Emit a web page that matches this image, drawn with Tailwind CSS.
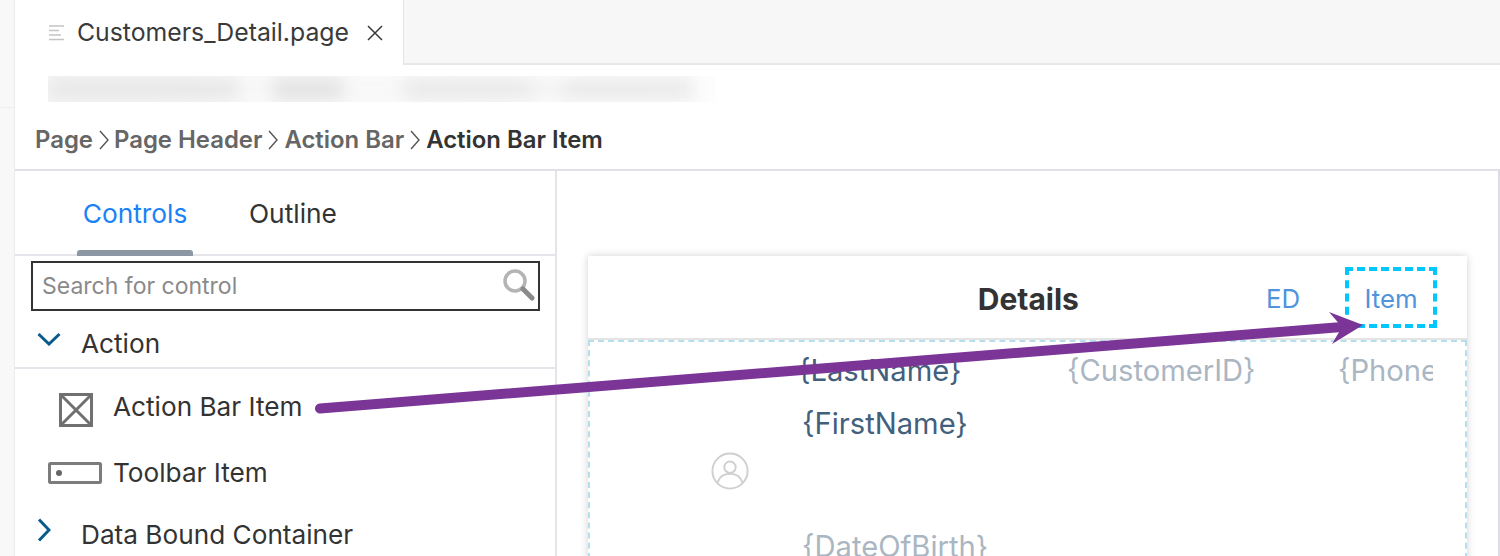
<!DOCTYPE html>
<html lang="en">
<head>
    <meta charset="UTF-8">
    <title>Customers_Detail.page</title>
    <script src="https://cdn.jsdelivr.net/npm/@tailwindcss/browser@4"></script>
</head>
<body class="bg-white font-['Inter',sans-serif] text-[#333] overflow-hidden">
<div class="relative flex w-[1500px] h-[556px] overflow-hidden">
    <!-- left gutter -->
    <div class="w-[15px] shrink-0 border-r border-[#ececec] bg-[#f8f8f8]">
        <div class="h-[108px] border-b border-[#eeeeee]"></div>
    </div>

    <div class="flex-1 flex flex-col min-w-0">
        <!-- tab strip -->
        <div class="flex h-[65px] bg-[#f7f7f7] shrink-0">
            <div class="flex items-center w-[389px] h-[65px] bg-white border-r border-[#e4e4e4] pl-[33px]">
                <svg class="w-[18px] h-[18px] mr-[11px] text-[#c4c4c4]" viewBox="0 0 18 18" fill="none" stroke="currentColor" stroke-width="1.6">
                    <path d="M1 2h15M1 6.500h10M1 11h12M1 15.500h15"/>
                </svg>
                <span class="text-[24.800px] leading-none text-[#3a3a3a]">Customers_Detail.page</span>
                <svg class="w-[18px] h-[18px] ml-[17px] text-[#3a3a3a]" viewBox="0 0 18 18" fill="none" stroke="currentColor" stroke-width="1.5">
                    <path d="M2 2l14 14M16 2L2 16"/>
                </svg>
            </div>
            <div class="flex-1 border-b-2 border-[#e8e8e8]"></div>
        </div>

        <!-- blurred path + breadcrumb -->
        <div class="h-[106px] shrink-0 border-b-2 border-[#e0e0e6] flex flex-col">
            <div class="ml-[33px] mt-[11px] w-[667px] h-[26px] overflow-hidden bg-linear-to-r from-[#f6f6f6] to-[#fdfdfd] flex items-center">
                <div class="flex w-full h-[20px] blur-[9px]">
                    <div class="w-[190px] bg-[#e6e6e6]"></div>
                    <div class="w-[35px] bg-[#f8f8f8]"></div>
                    <div class="w-[70px] bg-[#e0e0e0]"></div>
                    <div class="w-[60px] bg-[#f8f8f8]"></div>
                    <div class="w-[130px] bg-[#e8e8e8]"></div>
                    <div class="w-[30px] bg-[#f4f4f4]"></div>
                    <div class="w-[130px] bg-[#e8e8e8]"></div>
                </div>
            </div>
            <div class="flex items-center mt-[24px] ml-[20px] h-[28px] text-[23.900px] font-semibold text-[#666]">
                <span>Page</span>
                <svg class="w-[14px] h-[24px] mx-[3.500px] text-[#555]" viewBox="0 0 14 24" fill="none" stroke="currentColor" stroke-width="1.4"><path d="M3 3l8 9-8 9"/></svg>
                <span>Page Header</span>
                <svg class="w-[14px] h-[24px] mx-[4px] text-[#555]" viewBox="0 0 14 24" fill="none" stroke="currentColor" stroke-width="1.4"><path d="M3 3l8 9-8 9"/></svg>
                <span>Action Bar</span>
                <svg class="w-[14px] h-[24px] mx-[4px] text-[#555]" viewBox="0 0 14 24" fill="none" stroke="currentColor" stroke-width="1.4"><path d="M3 3l8 9-8 9"/></svg>
                <span class="text-[#333]">Action Bar Item</span>
            </div>
        </div>

        <div class="flex flex-1 min-h-0">
            <!-- controls panel -->
            <div class="w-[542px] shrink-0 border-r-2 border-[#e4e4ea]">
                <div class="flex h-[85px] border-b-2 border-[#e4e4ea] pl-[62px] relative">
                    <div class="relative w-[116px] flex justify-center pt-[27px] text-[26.300px] leading-[32px] text-[#1a82f7]">
                        Controls
                        <div class="absolute left-0 right-0 -bottom-[2px] h-[6px] rounded-t-[3px] bg-[#8b97a3]"></div>
                    </div>
                    <div class="ml-[56px] pt-[27px] text-[26.300px] leading-[32px] text-[#333]">Outline</div>
                </div>
                <div class="ml-[16px] mr-[15px] mt-[5px] h-[50px] border-2 border-[#333] flex items-center justify-between pl-[9px] pr-[3px]">
                    <span class="text-[23px] text-[#8a8a8a]">Search for control</span>
                    <svg class="w-[33px] h-[33px] -mt-[3px]" viewBox="0 0 33 33" fill="none">
                        <circle cx="13" cy="13" r="10" stroke="#b4b4b4" stroke-width="3.500"/>
                        <path d="M21 21l9 9" stroke="#8a8a8a" stroke-width="5" stroke-linecap="round"/>
                    </svg>
                </div>
                <div class="flex items-center h-[58px] border-b-2 border-[#e4e4ea] pl-[22px]">
                    <svg class="w-[24px] h-[14px] text-[#0b5a8c]" viewBox="0 0 24 14" fill="none" stroke="currentColor" stroke-width="3"><path d="M1.500 2l10.500 10L22.500 2"/></svg>
                    <span class="ml-[20px] mt-[10px] text-[26.200px] text-[#333]">Action</span>
                </div>
                <div class="flex items-center h-[75px] pl-[44px]">
                    <svg class="w-[34px] h-[34px] mt-[7px]" viewBox="0 0 34 34" fill="none" stroke="#707070" stroke-width="3">
                        <rect x="1.500" y="1.500" width="31" height="31"/>
                        <path d="M2 2l30 30M32 2L2 32"/>
                    </svg>
                    <span class="ml-[20px] text-[26.200px] text-[#333]">Action Bar Item</span>
                </div>
                <div class="flex items-center h-[57px] pl-[33px]">
                    <svg class="w-[54px] h-[22px]" viewBox="0 0 54 22" fill="none">
                        <rect x="1.500" y="1.500" width="51" height="19" rx="1" stroke="#7c7c7c" stroke-width="3"/>
                        <circle cx="11" cy="11" r="3" fill="#666"/>
                    </svg>
                    <span class="ml-[11px] text-[26.200px] text-[#333]">Toolbar Item</span>
                </div>
                <div class="flex items-center h-[67px] pl-[22px]">
                    <svg class="w-[14px] h-[24px] -mt-[10px] text-[#0b5a8c]" viewBox="0 0 14 24" fill="none" stroke="currentColor" stroke-width="3"><path d="M2 1.500L12 12 2 22.500"/></svg>
                    <span class="ml-[30px] text-[26.200px] text-[#333]">Data Bound Container</span>
                </div>
            </div>

            <!-- page preview -->
            <div class="flex-1 min-w-0 pl-[31px] pt-[85px] pr-[31px] border-r-2 border-[#dcdce4]">
                <div class="h-[400px] bg-white shadow-[0_0_8px_rgba(0,0,0,0.18)]">
                    <div class="relative h-[84px] border-b-2 border-[#e4e4e4]">
                        <div class="flex items-center justify-end h-[82px] pr-[30px]">
                            <span class="pt-[4px] text-[30px] font-bold text-[#333] mr-[187px]">Details</span>
                            <span class="pt-[4px] text-[25.800px] text-[#4f94dc] mr-[45px]">ED</span>
                            <span class="flex items-center justify-center w-[92px] h-[61px] pt-[5px] border-[4px] border-dashed border-[#00c8ff] text-[25.800px] text-[#4f94dc]">Item</span>
                        </div>
                    </div>
                    <div class="h-[300px] border-2 border-dashed border-[#b5dfec] grid grid-cols-[210px_267px_1fr]">
                        <div class="flex justify-end items-start pt-[110px] pr-[51px]">
                            <svg class="w-[38px] h-[38px] text-[#cfcfcf]" viewBox="0 0 40 40" fill="none" stroke="currentColor" stroke-width="2">
                                <circle cx="20" cy="20" r="18.500"/>
                                <circle cx="20" cy="16" r="6"/>
                                <path d="M7 32c2-7 8-9 13-9s11 2 13 9"/>
                            </svg>
                        </div>
                        <div class="pt-[10px] text-[29.200px] leading-[38px] text-[#42607c] whitespace-nowrap">
                            <div class="-ml-[2px]">{LastName}</div>
                            <div class="mt-[15px] ml-[2px]">{FirstName}</div>
                            <div class="mt-[85px] ml-[2px] text-[#aab6c2]">{DateOfBirth}</div>
                        </div>
                        <div class="flex pt-[10px] text-[29.200px] leading-[38px] text-[#aab6c2]">
                            <div class="w-[271px] shrink-0">{CustomerID}</div>
                            <div class="w-[95px] shrink-0 overflow-hidden whitespace-nowrap">{Phone}</div>
                        </div>
                    </div>
                </div>
            </div>
        </div>
    </div>

    <!-- annotation arrow -->
    <svg class="absolute left-0 top-0 pointer-events-none" width="1500" height="556" viewBox="0 0 1500 556" fill="none">
        <path d="M320 408.500L1342 327" stroke="#7a3597" stroke-width="10" stroke-linecap="round"/>
        <path d="M1363 325L1329 312 1342 327 1332 344Z" fill="#7a3597"/>
    </svg>
</div>
</body>
</html>
